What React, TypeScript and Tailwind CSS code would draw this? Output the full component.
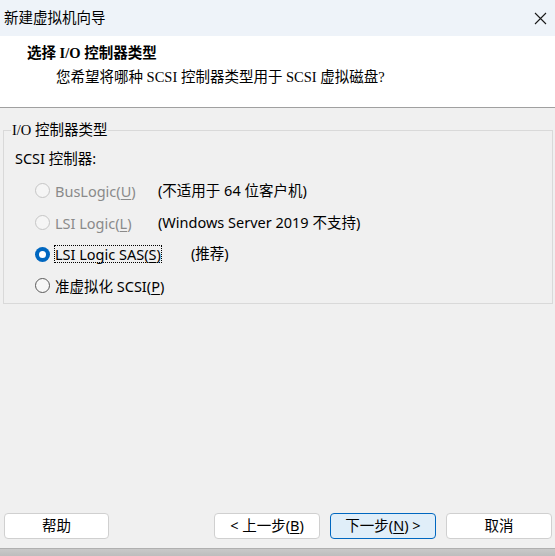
import React from 'react';

const sans = { fontFamily: '"Noto Sans", "Noto Sans CJK SC", sans-serif' };
const serif = { fontFamily: '"Liberation Serif", "Noto Sans CJK SC", serif' };

function U({ children }: { children: React.ReactNode }) {
  return <span className="underline underline-offset-2">{children}</span>;
}

function Radio({ checked, disabled }: { checked?: boolean; disabled?: boolean }) {
  if (checked) {
    return (
      <span className="w-[15px] h-[15px] rounded-full bg-[#0067c0] flex items-center justify-center shrink-0">
        <span className="w-[7px] h-[7px] rounded-full bg-white" />
      </span>
    );
  }
  return (
    <span
      className={
        'w-[15px] h-[15px] rounded-full border shrink-0 ' +
        (disabled ? 'border-[#c5c5c5] bg-[#f5f5f5]' : 'border-[#5a5a5a] bg-[#f7f7f7]')
      }
    />
  );
}

interface RowProps {
  label: React.ReactNode;
  note?: string;
  col: string;
  checked?: boolean;
  disabled?: boolean;
  focused?: boolean;
}

function Row({ label, note, col, checked, disabled, focused }: RowProps) {
  return (
    <div className="h-[31.7px] flex items-center ml-[20px]">
      <div className={'flex items-center gap-[4px] ' + col}>
        <Radio checked={checked} disabled={disabled} />
        <span
          className={
            'leading-[16px] px-[0px] ' +
            (disabled ? 'text-[#8a8a8a] ' : 'text-black ') +
            (focused ? 'border border-dotted border-black' : 'border border-transparent')
          }
        >
          {label}
        </span>
      </div>
      {note && <span className="text-black">{note}</span>}
    </div>
  );
}

function Btn({ children, primary, w }: { children: React.ReactNode; primary?: boolean; w: string }) {
  return (
    <button
      className={
        'h-[26px] rounded-[4px] border text-[14.5px] text-black flex items-center justify-center ' +
        w +
        (primary ? ' bg-[#e0eef9] border-[#0067c0]' : ' bg-white border-[#d0d0d0]')
      }
      style={sans}
    >
      {children}
    </button>
  );
}

export default function App() {
  return (
    <div className="w-[555px] h-[556px] bg-[#f0f0f0] flex flex-col text-[14.5px] text-black overflow-hidden" style={sans}>
      <div className="h-[36px] shrink-0 bg-[#eef3f9] flex items-center justify-between pl-[4px] pr-[7px]">
        <span>新建虚拟机向导</span>
        <svg width="13" height="13" viewBox="0 0 13 13" className="mr-[1px]">
          <path d="M1 1 L12 12 M12 1 L1 12" stroke="#1a1a1a" strokeWidth="1.1" />
        </svg>
      </div>

      <div className="h-[72px] shrink-0 bg-white border-b border-[#a0a0a0] pt-[7px]">
        <div className="pl-[27px] font-bold leading-[20px]" style={serif}>
          选择 I/O 控制器类型
        </div>
        <div className="pl-[56px] mt-[4px] leading-[20px]" style={serif}>
          您希望将哪种 SCSI 控制器类型用于 SCSI 虚拟磁盘?
        </div>
      </div>

      <fieldset className="mt-[12px] ml-[3px] mr-[2px] border border-[#d9d9d9] pl-[11px] pb-[1px]">
        <legend className="ml-[-4px] px-[1px] leading-[20px]" style={serif}>
          I/O 控制器类型
        </legend>
        <div className="mt-[8px] leading-[20px]">SCSI 控制器:</div>
        <div className="mt-[7px]">
          <Row
            col="w-[123px]"
            disabled
            label={
              <>
                BusLogic(<U>U</U>)
              </>
            }
            note="(不适用于 64 位客户机)"
          />
          <Row
            col="w-[123px]"
            disabled
            label={
              <>
                LSI Logic(<U>L</U>)
              </>
            }
            note="(Windows Server 2019 不支持)"
          />
          <Row
            col="w-[156px]"
            checked
            focused
            label={
              <>
                LSI Logic SAS(<U>S</U>)
              </>
            }
            note="(推荐)"
          />
          <Row
            col="w-[156px]"
            label={
              <>
                准虚拟化 SCSI(<U>P</U>)
              </>
            }
          />
        </div>
      </fieldset>

      <div className="flex-1" />

      <div className="flex items-center pl-[4px] pr-[3px] mb-[9px]">
        <Btn w="w-[105px]">帮助</Btn>
        <div className="flex-1" />
        <div className="flex gap-[10px]">
          <Btn w="w-[106px]">
            &lt; 上一步(<U>B</U>)
          </Btn>
          <Btn w="w-[106px]" primary>
            下一步(<U>N</U>) &gt;
          </Btn>
          <Btn w="w-[106px]">取消</Btn>
        </div>
      </div>

      <div className="h-[8px] shrink-0 bg-gradient-to-b from-[#c9c9c9] to-[#bdbdbd] border-t border-[#b0b0b0]" />
    </div>
  );
}
